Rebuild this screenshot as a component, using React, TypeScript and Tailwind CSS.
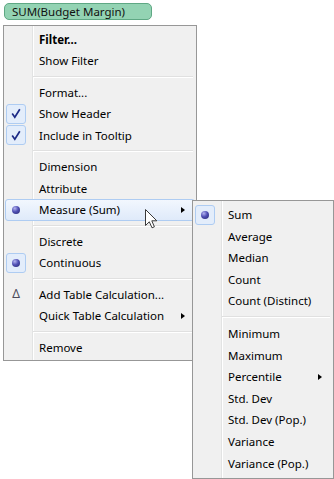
import React from "react";

type Item =
  | { sep: true }
  | {
      sep?: false;
      label: string;
      bold?: boolean;
      icon?: "check" | "bullet" | "delta";
      box?: boolean;
      hot?: boolean;
      arrow?: boolean;
    };

const mainItems: Item[] = [
  { label: "Filter...", bold: true },
  { label: "Show Filter" },
  { sep: true },
  { label: "Format..." },
  { label: "Show Header", icon: "check", box: true },
  { label: "Include in Tooltip", icon: "check", box: true },
  { sep: true },
  { label: "Dimension" },
  { label: "Attribute" },
  { label: "Measure (Sum)", icon: "bullet", hot: true, arrow: true },
  { sep: true },
  { label: "Discrete" },
  { label: "Continuous", icon: "bullet", box: true },
  { sep: true },
  { label: "Add Table Calculation...", icon: "delta" },
  { label: "Quick Table Calculation", arrow: true },
  { sep: true },
  { label: "Remove" },
];

const subItems: Item[] = [
  { label: "Sum", icon: "bullet", box: true },
  { label: "Average" },
  { label: "Median" },
  { label: "Count" },
  { label: "Count (Distinct)" },
  { sep: true },
  { label: "Minimum" },
  { label: "Maximum" },
  { label: "Percentile", arrow: true },
  { label: "Std. Dev" },
  { label: "Std. Dev (Pop.)" },
  { label: "Variance" },
  { label: "Variance (Pop.)" },
];

function Icon({ kind }: { kind?: "check" | "bullet" | "delta" }) {
  if (kind === "check")
    return (
      <svg width="10" height="11" viewBox="0 0 10 11">
        <path d="M1.2 5.6 L3.8 9.2 L8.8 1.2" fill="none" stroke="#1c2a86" strokeWidth="1.7" />
      </svg>
    );
  if (kind === "bullet")
    return (
      <span className="block w-[8px] h-[8px] rounded-full bg-[radial-gradient(circle_at_35%_30%,#b4b4f0_0%,#5050b4_45%,#26266e_100%)]" />
    );
  if (kind === "delta")
    return <span className="text-[12px] leading-none text-[#4b4b5a]">Δ</span>;
  return null;
}

function Menu({ items, className, sub }: { items: Item[]; className?: string; sub?: boolean }) {
  return (
    <div
      className={
        "border border-[#979797] bg-[linear-gradient(to_right,#f0f0f0_28px,#e2e3e3_28px,#e2e3e3_29px,#ffffff_29px,#ffffff_30px,#f0f0f0_30px)] px-[1px] pb-[2px] " +
        (sub ? "pt-[3px] " : "pt-[2.5px] ") +
        (className ?? "")
      }
    >
      {items.map((it, i) =>
        it.sep ? (
          <div key={i} className={(sub ? "h-[11px] " : "h-[10px] ") + "flex items-center pl-[28px] pr-[2px]"}>
            <div className="w-full h-[2px] border-t border-[#e0e0e0] border-b border-b-white" />
          </div>
        ) : (
          <div
            key={i}
            className={
              (sub ? "h-[21.6px] " : "h-[21.5px] ") +
              "flex items-center rounded-[3px] border " +
              (it.hot
                ? "border-[#aeccf2] bg-[linear-gradient(to_bottom,#f2f7fe,#dfeafa)]"
                : "border-transparent")
            }
          >
            <div
              className={
                "w-[20px] h-[20px] shrink-0 flex items-center justify-center rounded-[3px] border " +
                (it.box ? "border-[#aeccf2] bg-[#e3edfb]" : "border-transparent")
              }
            >
              <Icon kind={it.icon} />
            </div>
            <span
              className={
                "ml-[13px] whitespace-nowrap text-[11.5px] leading-none text-black " +
                (it.bold ? "font-bold" : "")
              }
            >
              {it.label}
            </span>
            {it.arrow && (
              <span className="ml-auto mr-[9px] w-0 h-0 border-y-[3.5px] border-y-transparent border-l-[4px] border-l-black" />
            )}
          </div>
        )
      )}
    </div>
  );
}

export default function App() {
  return (
    <div className="relative w-[334px] h-[479px] bg-white overflow-hidden font-['Noto_Sans',sans-serif]">
      <div className="ml-[4px] mt-[3px] w-[148px] h-[17px] rounded-[5px] border border-[#5fa884] bg-[#93d3b3] flex items-center pl-[7px]">
        <span className="text-[11.5px] leading-none text-[#111]">SUM(Budget Margin)</span>
      </div>
      <Menu items={mainItems} className="ml-[3px] mt-[5px] w-[194px]" />
      <Menu items={subItems} sub className="absolute left-[192px] top-[200px] w-[142px] h-[279px]" />
      <svg className="absolute left-[145px] top-[209px]" width="13" height="20" viewBox="0 0 13 20">
        <path
          d="M0.5 0.5 L0.5 16.5 L4.3 12.8 L7 18.8 L9.4 17.8 L6.8 11.8 L11.8 11.8 Z"
          fill="#ffffff"
          stroke="#3a3a3a"
          strokeWidth="1"
          strokeLinejoin="round"
        />
      </svg>
    </div>
  );
}
